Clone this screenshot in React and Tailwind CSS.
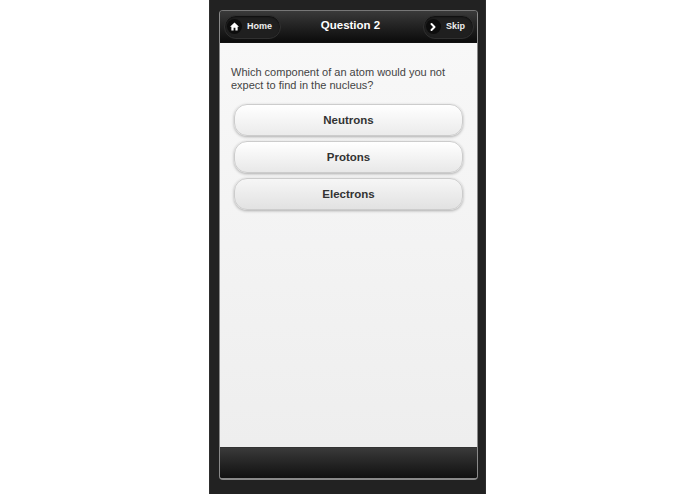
import { ChevronRight } from 'lucide-react'

const answers = [
    { name: 'Neutrons', bg: 'from-white to-[#ebebeb]' },
    { name: 'Protons', bg: 'from-white to-[#e8e8e8]' },
    { name: 'Electrons', bg: 'from-[#f6f6f6] to-[#e2e2e2]' },
]

function HomeIcon() {
    return (
        <svg width="9" height="9" viewBox="0 0 10 10" fill="white">
            <path d="M5 0.5 L10 5.2 H8.5 V9.5 H6 V6.5 H4 V9.5 H1.5 V5.2 H0 Z" />
        </svg>
    )
}

function NavButton({ icon, label }) {
    return (
        <div className="flex items-center h-[24px] pl-[2px] pr-[8px] gap-[5px] rounded-full bg-[#1f1f1f] border border-[#303030] shadow-[inset_0_1px_2px_rgba(0,0,0,0.6)]">
            <span className="w-[15px] h-[15px] rounded-full bg-[#0d0d0d] flex items-center justify-center text-white">
                {icon}
            </span>
            <span className="text-[9px] font-bold text-[#eee]">{label}</span>
        </div>
    )
}

export default function App() {
    return (
        <div className="w-[695px] h-[494px] bg-white flex justify-center font-['Liberation_Sans',Arial,sans-serif] overflow-hidden">
            <div className="w-[277px] h-full bg-[#222] border-x border-[#2e2e2e] pt-[10px] pl-[9px] pr-[7px] pb-[14px]">
                <div className="h-full flex flex-col rounded-[4px] overflow-hidden border border-[#8a8a8a] border-t-[#777] border-b-2">
                    <header className="h-[32px] shrink-0 flex items-center justify-between pl-[4px] pr-[3px] bg-gradient-to-b from-[#3a3a3a] to-[#0c0c0c] border-b border-[#111]">
                        <NavButton icon={<HomeIcon />} label="Home" />
                        <h1 className="text-[11.5px] font-bold text-white -mt-[2px] mr-[3px]">Question 2</h1>
                        <NavButton icon={<ChevronRight size={12} strokeWidth={4} />} label="Skip" />
                    </header>

                    <main className="flex-1 bg-gradient-to-b from-[#f8f8f8] to-[#eeeeee] pt-[23px] pl-[11px] pr-[12px]">
                        <p className="text-[11px] leading-[13px] text-[#444]">
                            Which component of an atom would you not expect to find in the nucleus?
                        </p>
                        <div className="mt-[12px] ml-[3px] mr-[2px] flex flex-col gap-[5px]">
                            {answers.map((a) => (
                                <button
                                    key={a.name}
                                    className={`h-[32px] pt-[1px] rounded-[13px] border border-[#ccc] bg-gradient-to-b ${a.bg} shadow-[0_1px_3px_rgba(0,0,0,0.3)] text-[11.5px] font-bold text-[#333]`}
                                >
                                    {a.name}
                                </button>
                            ))}
                        </div>
                    </main>

                    <footer className="h-[31px] shrink-0 bg-gradient-to-b from-[#3a3a3a] to-[#111] border-t border-[#333]" />
                </div>
            </div>
        </div>
    )
}
